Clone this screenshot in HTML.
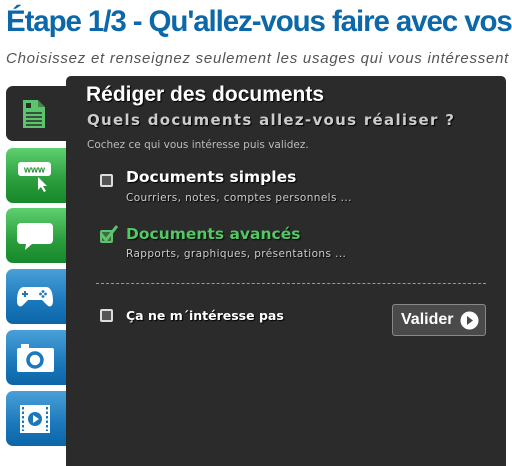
<!DOCTYPE html>
<html><head><meta charset="utf-8"><style>
*{margin:0;padding:0;box-sizing:border-box}
body{width:512px;height:456px;overflow:hidden;background:#fff;font-family:"Liberation Sans",sans-serif;position:relative}
h1{position:absolute;left:6px;top:5px;font-size:29.5px;font-weight:bold;color:#0c68a8;letter-spacing:-1.1px;white-space:nowrap}
.sub{position:absolute;left:6px;top:50px;font-size:15px;font-style:italic;color:#555;letter-spacing:0.75px;white-space:nowrap}
.tab{position:absolute;left:6px;width:64px;height:55px;border-radius:7px 0 0 7px;display:flex;align-items:center;justify-content:center;padding-right:6px}
.g{background:linear-gradient(#5fd06f,#2a9c3b 60%,#17882b)}
.b{background:linear-gradient(#4aa0d8,#1a78bb 60%,#0c66a8)}
.panel{position:absolute;left:66px;top:76px;width:440px;height:390px;background:#2b2b2b;border-radius:5px 5px 0 0}
.t{position:absolute;color:#fff;white-space:nowrap;font-family:"DejaVu Sans",sans-serif;text-shadow:1px 1px 1px #000}
.cb{position:absolute;width:13px;height:13px;border:2px solid #ddd;background:#555;border-radius:2px}
</style></head><body>
<h1>Étape 1/3 - Qu'allez-vous faire avec vos</h1>
<div class="sub">Choisissez et renseignez seulement les usages qui vous intéressent</div>
<div class="tab" style="top:86px;background:#2b2b2b;width:62px">
<svg width="26" height="32" viewBox="0 0 26 32"><path d="M2 2h15l7 7v21H2z" fill="#5cc46c"/><path d="M17 2v7h7" fill="#2b2b2b" opacity=".4"/><rect x="5" y="5" width="5" height="5" fill="#2b2b2b"/><path d="M5 15h16M5 19h16M5 23h16M5 27h16" stroke="#2b2b2b" stroke-width="1.5"/></svg></div>
<div class="tab g" style="top:148px"><svg width="36" height="32" viewBox="0 0 36 32"><rect x="1" y="2" width="33" height="14" rx="3" fill="#fff"/><text x="17.5" y="12.5" font-size="9" font-weight="bold" fill="#1d8a30" text-anchor="middle" font-family="Liberation Sans">www</text><path d="M21 17l0 13 3-3 3 5 2-1-3-5 4 0z" fill="#fff"/></svg></div>
<div class="tab g" style="top:208px"><svg width="38" height="32" viewBox="0 0 38 32"><path d="M5 3h28a4 4 0 0 1 4 4v13a4 4 0 0 1-4 4H16l-7 6 1-6H5a4 4 0 0 1-4-4V7a4 4 0 0 1 4-4z" fill="#fff"/></svg></div>
<div class="tab b" style="top:269px"><svg width="38" height="24" viewBox="0 0 38 24"><path d="M8 2h22c5 0 7 6 7 14 0 5-3 7-6 4l-5-5H12l-5 5c-3 3-6 1-6-4C1 8 3 2 8 2z" fill="#fff"/><path d="M9 6v6M6 9h6" stroke="#1a78bb" stroke-width="2"/><circle cx="27" cy="6.5" r="1.4" fill="#1a78bb"/><circle cx="27" cy="11.5" r="1.4" fill="#1a78bb"/><circle cx="24.5" cy="9" r="1.4" fill="#1a78bb"/><circle cx="29.5" cy="9" r="1.4" fill="#1a78bb"/></svg></div>
<div class="tab b" style="top:330px"><svg width="38" height="30" viewBox="0 0 38 30"><rect x="1" y="5" width="37" height="24" rx="2" fill="#fff"/><rect x="5" y="1" width="8" height="5" fill="#fff"/><circle cx="19" cy="17" r="7" fill="none" stroke="#1a78bb" stroke-width="3.5"/></svg></div>
<div class="tab b" style="top:391px"><svg width="32" height="30" viewBox="0 0 32 30"><rect x="1" y="1" width="30" height="28" fill="#fff"/><path d="M4 3v24M28 3v24" stroke="#1a78bb" stroke-width="2" stroke-dasharray="2.5 2"/><rect x="7" y="1" width="18" height="28" fill="#fff"/><circle cx="16" cy="15" r="7" fill="#1a78bb"/><path d="M14 11v8l6-4z" fill="#fff"/></svg></div>
<div class="panel"></div>
<div class="t" style="left:86px;top:83px;font-family:'Liberation Sans',sans-serif;font-weight:bold;font-size:21px">Rédiger des documents</div>
<div class="t" style="left:87px;top:111px;font-size:15px;font-weight:bold;color:#ccc;letter-spacing:1.3px">Quels documents allez-vous réaliser ?</div>
<div class="t" style="left:87px;top:139px;font-size:10.5px;color:#bbb;text-shadow:none">Cochez ce qui vous intéresse puis validez.</div>
<div class="cb" style="left:100px;top:174px"></div>
<div class="t" style="left:126px;top:168px;font-size:15.5px;font-weight:bold">Documents simples</div>
<div class="t" style="left:126px;top:192px;font-size:10.5px;color:#ccc;letter-spacing:.4px">Courriers, notes, comptes personnels ...</div>
<div class="cb" style="left:100px;top:230px;border-color:#5cc46c;background:#3d6b44"></div>
<svg style="position:absolute;left:98px;top:224px" width="22" height="20"><path d="M3 10l5 6L19 2" stroke="#5cc46c" stroke-width="3" fill="none"/></svg>
<div class="t" style="left:126px;top:225px;font-size:15.5px;font-weight:bold;color:#53c864">Documents avancés</div>
<div class="t" style="left:126px;top:248px;font-size:10.5px;color:#ccc;letter-spacing:.4px">Rapports, graphiques, présentations ...</div>
<div style="position:absolute;left:96px;top:283px;width:390px;border-top:1px dashed #999"></div>
<div class="cb" style="left:100px;top:309px"></div>
<div class="t" style="left:126px;top:308px;font-size:12.5px;font-weight:bold">Ça ne m´intéresse pas</div>
<div style="position:absolute;left:392px;top:304px;width:94px;height:32px;border:1px solid #888;border-radius:3px;background:#4a4a4a;color:#fff;font-weight:bold;font-size:16px;line-height:30px;padding-left:8px;font-family:'Liberation Sans',sans-serif">Valider<svg style="position:absolute;right:6px;top:6px" width="19" height="19"><circle cx="9.5" cy="9.5" r="9" fill="#fff"/><path d="M7 5v9l6-4.5z" fill="#4a4a4a"/></svg></div>
</body></html>
